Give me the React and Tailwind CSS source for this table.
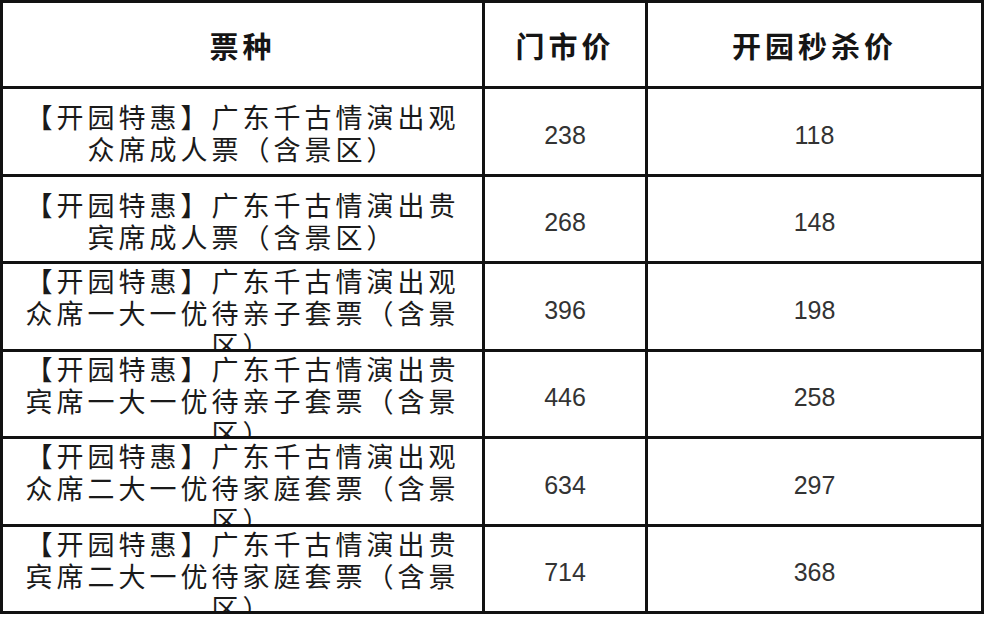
import React from 'react';

const rows = [
  { name: '【开园特惠】广东千古情演出观众席成人票（含景区）', price: 238, sale: 118, h: 'h-[88px]', tall: false },
  { name: '【开园特惠】广东千古情演出贵宾席成人票（含景区）', price: 268, sale: 148, h: 'h-[87px]', tall: false },
  { name: '【开园特惠】广东千古情演出观众席一大一优待亲子套票（含景区）', price: 396, sale: 198, h: 'h-[88px]', tall: true },
  { name: '【开园特惠】广东千古情演出贵宾席一大一优待亲子套票（含景区）', price: 446, sale: 258, h: 'h-[87px]', tall: true },
  { name: '【开园特惠】广东千古情演出观众席二大一优待家庭套票（含景区）', price: 634, sale: 297, h: 'h-[88px]', tall: true },
  { name: '【开园特惠】广东千古情演出贵宾席二大一优待家庭套票（含景区）', price: 714, sale: 368, h: 'h-[87px]', tall: true },
];

const cols = 'grid grid-cols-[482px_163px_336px]';

export default function App() {
  return (
    <div className="w-[985px] h-[617px] bg-white overflow-hidden">
      <div className="w-[984px] border-l-[3px] border-t-[3px] border-[#111]">
        {/* header */}
        <div className={`${cols} h-[86px]`}>
          {['票种', '门市价', '开园秒杀价'].map((t) => (
            <div
              key={t}
              className="flex items-center justify-center pt-[2px] border-r-[3px] border-b-[3px] border-[#111] font-['Noto_Sans_CJK_SC',sans-serif] font-bold text-[29px] tracking-[4px] text-[#151515]"
            >
              {t}
            </div>
          ))}
        </div>

        {rows.map((r) => (
          <div key={r.price} className={`${cols} ${r.h}`}>
            <div
              className={`flex justify-center px-[12px] overflow-hidden border-r-[3px] border-b-[3px] border-[#111] ${
                r.tall ? 'items-start pt-[1px]' : 'items-center pt-[3px]'
              }`}
            >
              <p className="text-center font-['Noto_Sans_CJK_SC',sans-serif] text-[27px] leading-[32px] tracking-[4px] text-[#1a1a1a]">
                {r.name}
              </p>
            </div>
            <div className="flex items-center justify-center pt-[8px] border-r-[3px] border-b-[3px] border-[#111] font-['Liberation_Sans',Arial,sans-serif] text-[25px] text-[#333]">
              {r.price}
            </div>
            <div className="flex items-center justify-center pt-[8px] border-r-[3px] border-b-[3px] border-[#111] font-['Liberation_Sans',Arial,sans-serif] text-[25px] text-[#333]">
              {r.sale}
            </div>
          </div>
        ))}
      </div>
    </div>
  );
}
